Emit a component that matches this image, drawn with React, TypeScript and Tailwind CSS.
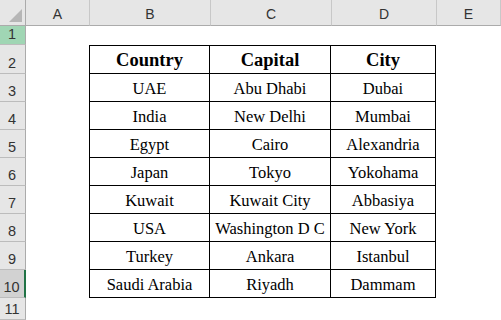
import React from "react";

const cols = ["A", "B", "C", "D", "E"];
const widths = ["w-[64px]", "w-[121px]", "w-[121px]", "w-[105px]", "w-[64px]"];

const data: string[][] = [
  ["UAE", "Abu Dhabi", "Dubai"],
  ["India", "New Delhi", "Mumbai"],
  ["Egypt", "Cairo", "Alexandria"],
  ["Japan", "Tokyo", "Yokohama"],
  ["Kuwait", "Kuwait City", "Abbasiya"],
  ["USA", "Washington D C", "New York"],
  ["Turkey", "Ankara", "Istanbul"],
  ["Saudi Arabia", "Riyadh", "Dammam"],
];

function RowHeader({ n, h, variant }: { n: number; h: string; variant?: "green" | "sel" }) {
  const bg =
    variant === "green" ? "bg-[#a0d6b4]" : variant === "sel" ? "bg-[#d2d2d2]" : "bg-[#e6e6e6]";
  return (
    <div
      className={`${h} w-[26px] shrink-0 ${bg} border-b border-[#bcbcbc] ${
        variant === "sel" ? "border-r-2 border-r-[#217346]" : "border-r border-r-[#ababab]"
      } flex items-end justify-center pb-[2px] pr-[1px] text-[14.5px] leading-[16px] text-[#333]`}
      style={{ fontFamily: '"Liberation Sans", Arial, sans-serif' }}
    >
      {n}
    </div>
  );
}

export default function App() {
  const serif = { fontFamily: '"Liberation Serif", "Times New Roman", serif' };
  return (
    <div className="w-[501px] h-[320px] bg-white overflow-hidden relative">
      {/* column header */}
      <div className="flex h-[26px]">
        <div className="w-[26px] h-[26px] shrink-0 bg-[#e6e6e6] border-b border-r border-[#ababab] relative">
          <svg className="absolute left-[9px] top-[9px]" width="14" height="14" viewBox="0 0 14 14">
            <polygon points="13,0 13,13 0,13" fill="#b6b6b6" />
          </svg>
        </div>
        {cols.map((c, i) => (
          <div
            key={c}
            className={`${widths[i]} h-[26px] shrink-0 bg-[#e6e6e6] border-b border-b-[#ababab] border-r border-r-[#c8c8c8] flex items-center justify-center pt-[3px] text-[14px] text-[#333]`}
            style={{ fontFamily: '"Liberation Sans", Arial, sans-serif' }}
          >
            {c}
          </div>
        ))}
      </div>

      {/* row 1 */}
      <div className="flex h-[19px]">
        <RowHeader n={1} h="h-[19px]" variant="green" />
      </div>

      {/* row 2 header */}
      <div className="flex h-[29px]">
        <RowHeader n={2} h="h-[29px]" />
        <div className="w-[63px] shrink-0" />
        {["Country", "Capital", "City"].map((t, i) => (
          <div
            key={t}
            className={`${widths[i + 1]} h-[29px] shrink-0 border-t border-b border-r border-black ${
              i === 0 ? "border-l" : ""
            } flex items-center justify-center pt-[2px] text-[18.5px] font-bold text-black`}
            style={serif}
          >
            {t}
          </div>
        ))}
      </div>

      {data.map((r, ri) => (
        <div key={ri} className="flex h-[28px]">
          <RowHeader n={ri + 3} h="h-[28px]" variant={ri === 7 ? "sel" : undefined} />
          <div className="w-[63px] shrink-0" />
          {r.map((t, i) => (
            <div
              key={i}
              className={`${widths[i + 1]} h-[28px] shrink-0 border-b border-r border-black ${
                i === 0 ? "border-l" : ""
              } flex items-center justify-center pt-[3px] text-[16.5px] text-black`}
              style={serif}
            >
              {t}
            </div>
          ))}
        </div>
      ))}

      <div className="flex h-[22px]">
        <RowHeader n={11} h="h-[22px]" />
      </div>
    </div>
  );
}
